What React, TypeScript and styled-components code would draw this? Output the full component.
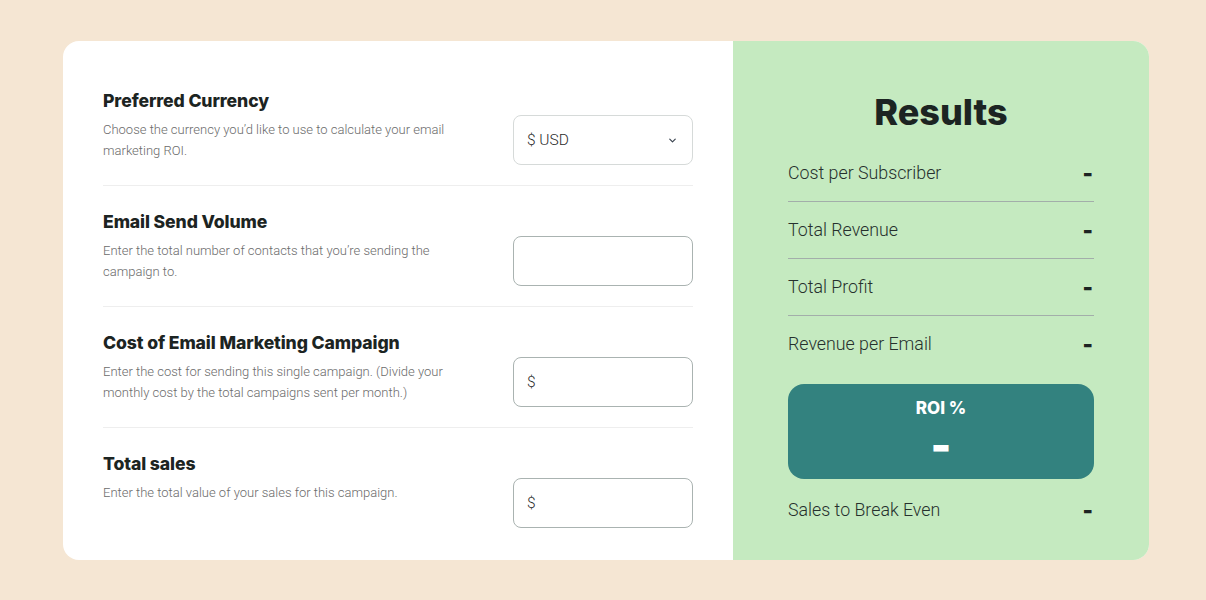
import React from "react";
import styled, { createGlobalStyle } from "styled-components";

const Global = createGlobalStyle`
  html, body { margin: 0; padding: 0; background: #f5e6d3; }
  body { font-family: "Roboto", "Liberation Sans", sans-serif; }
  * { box-sizing: border-box; }
`;

const Page = styled.div`
  width: 1206px;
  height: 600px;
  padding: 41px 57px 40px 63px;
`;

const Card = styled.div`
  display: flex;
  width: 1086px;
  height: 519px;
  border-radius: 16px;
  overflow: hidden;
  background: #ffffff;
`;

const Form = styled.div`
  width: 670px;
  padding: 48px 40px 12px 40px;
  display: flex;
  flex-direction: column;
`;

const Field = styled.div`
  display: flex;
  justify-content: space-between;
  align-items: flex-start;
  padding: 24px 0 20px;
  border-bottom: 1px solid #eeeeee;
  &:first-child { padding-top: 0; }
  &:last-child { border-bottom: none; }
`;

const FieldText = styled.div`
  width: 352px;
`;

const FieldTitle = styled.h3`
  margin: 0;
  font-family: "Inter", sans-serif;
  font-weight: 800;
  font-size: 17.6px;
  line-height: 23px;
  letter-spacing: -0.1px;
  color: #1c2422;
`;

const FieldHint = styled.p`
  margin: 8px 0 0;
  font-family: "Roboto", sans-serif;
  font-weight: 300;
  font-size: 13px;
  line-height: 20.5px;
  color: #6b6b6b;
`;

const Control = styled.div<{ $light?: boolean }>`
  margin-top: 26px;
  width: 180px;
  height: 50px;
  flex-shrink: 0;
  border: 1px solid ${(p) => (p.$light ? "#d6dad9" : "#aab3b1")};
  border-radius: 8px;
  display: flex;
  align-items: center;
  justify-content: space-between;
  padding: 0 14px 0 13px;
  font-family: "Roboto", sans-serif;
  font-weight: 300;
  font-size: 15.5px;
  color: #2a2a2a;
  background: #fff;
`;

const Prefix = styled.span`
  font-weight: 300;
  font-size: 15.5px;
  color: #2a2a2a;
`;

const Results = styled.div`
  flex: 1;
  background: #c5eac0;
  padding: 51px 55px 0;
  display: flex;
  flex-direction: column;
`;

const ResultsTitle = styled.h2`
  margin: 0 0 13px;
  text-align: center;
  font-family: "Inter", sans-serif;
  font-weight: 800;
  font-size: 36px;
  line-height: 40px;
  letter-spacing: 0;
  color: #1c2422;
`;

const ResultRow = styled.div<{ $divider?: boolean }>`
  display: flex;
  justify-content: space-between;
  align-items: center;
  padding: 17px 0;
  border-bottom: ${(p) => (p.$divider ? "1px solid #a3aeaa" : "none")};
`;

const ResultLabel = styled.span`
  font-family: "Roboto", sans-serif;
  font-weight: 300;
  font-size: 17.8px;
  line-height: 22px;
  color: #26302d;
`;

const ResultValue = styled.span`
  font-family: "Inter", sans-serif;
  font-weight: 900;
  font-size: 22px;
  line-height: 22px;
  color: #1c2422;
  margin-right: 1px;
`;

const RoiBox = styled.div`
  margin: 12px 0 3px;
  height: 95px;
  border-radius: 16px;
  background: #33827f;
  display: flex;
  flex-direction: column;
  align-items: center;
  padding-top: 13px;
  color: #fff;
`;

const RoiTitle = styled.div`
  font-family: "Inter", sans-serif;
  font-weight: 800;
  font-size: 17px;
  line-height: 22px;
`;

const RoiValue = styled.div`
  margin-top: 6px;
  font-family: "Inter", sans-serif;
  font-weight: 900;
  font-size: 44px;
  line-height: 40px;
`;

const Chevron = () => (
  <svg width="11" height="11" viewBox="0 0 24 24" fill="none" stroke="#3b4450" strokeWidth="2.6" strokeLinecap="round" strokeLinejoin="round">
    <path d="M6 9l6 6 6-6" />
  </svg>
);

export default function App() {
  return (
    <>
      <Global />
      <Page>
        <Card>
          <Form>
            <Field>
              <FieldText>
                <FieldTitle>Preferred Currency</FieldTitle>
                <FieldHint>Choose the currency you’d like to use to calculate your email marketing ROI.</FieldHint>
              </FieldText>
              <Control $light>
                <span>$ USD</span>
                <Chevron />
              </Control>
            </Field>
            <Field>
              <FieldText>
                <FieldTitle>Email Send Volume</FieldTitle>
                <FieldHint>Enter the total number of contacts that you’re sending the campaign to.</FieldHint>
              </FieldText>
              <Control />
            </Field>
            <Field>
              <FieldText>
                <FieldTitle>Cost of Email Marketing Campaign</FieldTitle>
                <FieldHint>Enter the cost for sending this single campaign. (Divide your monthly cost by the total campaigns sent per month.)</FieldHint>
              </FieldText>
              <Control>
                <Prefix>$</Prefix>
              </Control>
            </Field>
            <Field>
              <FieldText>
                <FieldTitle>Total sales</FieldTitle>
                <FieldHint>Enter the total value of your sales for this campaign.</FieldHint>
              </FieldText>
              <Control>
                <Prefix>$</Prefix>
              </Control>
            </Field>
          </Form>
          <Results>
            <ResultsTitle>Results</ResultsTitle>
            <ResultRow $divider>
              <ResultLabel>Cost per Subscriber</ResultLabel>
              <ResultValue>-</ResultValue>
            </ResultRow>
            <ResultRow $divider>
              <ResultLabel>Total Revenue</ResultLabel>
              <ResultValue>-</ResultValue>
            </ResultRow>
            <ResultRow $divider>
              <ResultLabel>Total Profit</ResultLabel>
              <ResultValue>-</ResultValue>
            </ResultRow>
            <ResultRow>
              <ResultLabel>Revenue per Email</ResultLabel>
              <ResultValue>-</ResultValue>
            </ResultRow>
            <RoiBox>
              <RoiTitle>ROI %</RoiTitle>
              <RoiValue>-</RoiValue>
            </RoiBox>
            <ResultRow>
              <ResultLabel>Sales to Break Even</ResultLabel>
              <ResultValue>-</ResultValue>
            </ResultRow>
          </Results>
        </Card>
      </Page>
    </>
  );
}
